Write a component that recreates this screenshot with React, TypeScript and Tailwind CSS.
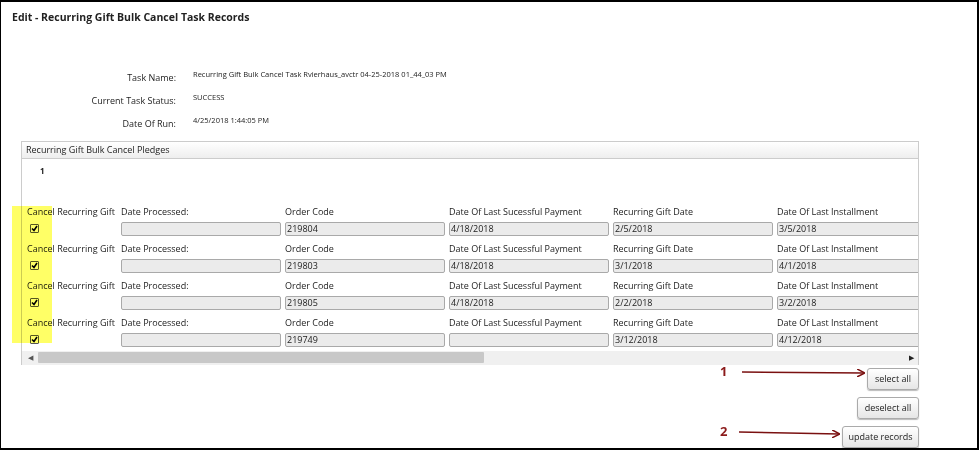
import React from "react";

const rows = [
  ["219804", "4/18/2018", "2/5/2018", "3/5/2018"],
  ["219803", "4/18/2018", "3/1/2018", "4/1/2018"],
  ["219805", "4/18/2018", "2/2/2018", "3/2/2018"],
  ["219749", "", "3/12/2018", "4/12/2018"],
];

const Inp = ({ v }: { v: string }) => (
  <div className="w-[160px] h-[14px] border border-[#a9a9a9] rounded-[2px] bg-[#ebebeb] text-[9px] leading-[12px] pl-[1px] shrink-0">{v}</div>
);

const Check = () => (
  <div className="w-[9px] h-[9px] border border-[#555] bg-white flex items-center justify-center rounded-[1px]">
    <svg width="7" height="7" viewBox="0 0 7 7"><path d="M1 3.5 L3 5.5 L6 1" stroke="#000" strokeWidth="1.6" fill="none" /></svg>
  </div>
);

const Btn = ({ t, w }: { t: string; w: string }) => (
  <div className={`${w} h-[22px] border border-[#aaa] rounded-[3px] bg-gradient-to-b from-white to-[#e6e6e6] text-[9px] flex items-center justify-center shadow-[0_1px_1px_#bbb]`}>{t}</div>
);

export default function App() {
  return (
    <div className="w-[979px] h-[450px] bg-white relative overflow-hidden text-[#222]" style={{ fontFamily: '"Open Sans", sans-serif' }}>
      <div className="absolute inset-0 border-[2px] border-black border-l-[1px] pointer-events-none" />
      <div className="pt-[10px] pl-[12px] font-bold text-[10.5px]">Edit - Recurring Gift Bulk Cancel Task Records</div>
      <div className="mt-[45px] flex flex-col gap-[10px] text-[9px]">
        {[
          ["Task Name:", "Recurring Gift Bulk Cancel Task Rvierhaus_avctr 04-25-2018 01_44_03 PM"],
          ["Current Task Status:", "SUCCESS"],
          ["Date Of Run:", "4/25/2018 1:44:05 PM"],
        ].map(([l, v]) => (
          <div key={l} className="flex items-start h-[13px]">
            <div className="w-[176px] text-right text-[9px]">{l}</div>
            <div className="ml-[17px] text-[7.5px] -mt-[2px]">{v}</div>
          </div>
        ))}
      </div>
      <div className="ml-[21px] mt-[11px] w-[898px] border border-[#ccc] border-b-0">
        <div className="h-[17px] bg-gradient-to-b from-white to-[#eee] border-b border-[#ccc] text-[9px] leading-[16px] pl-[4px]">Recurring Gift Bulk Cancel Pledges</div>
        <div className="h-[44px] pl-[18px] pt-[6px] text-[8px] font-bold">1</div>
        <div className="overflow-hidden text-[9px] whitespace-nowrap">
          {rows.map((r, i) => (
            <div key={i} className="h-[37px]">
              <div className="flex h-[17px] items-center pl-[5px]">
                <div className="w-[94px] shrink-0">Cancel Recurring Gift</div>
                <div className="w-[164px] shrink-0">Date Processed:</div>
                <div className="w-[164px] shrink-0">Order Code</div>
                <div className="w-[164px] shrink-0">Date Of Last Sucessful Payment</div>
                <div className="w-[164px] shrink-0">Recurring Gift Date</div>
                <div className="shrink-0">Date Of Last Installment</div>
              </div>
              <div className="flex items-center h-[18px] gap-[4px]">
                <div className="w-[95px] pl-[8px] shrink-0"><Check /></div>
                <Inp v="" />
                <Inp v={r[0]} />
                <Inp v={r[1]} />
                <Inp v={r[2]} />
                <Inp v={r[3]} />
              </div>
            </div>
          ))}
        </div>
        <div className="h-[14px] bg-[#f0f0f0] flex items-center">
          <div className="w-[16px] text-[7px] text-center text-[#555]">◀</div>
          <div className="w-[446px] h-[11px] bg-[#c8c8c8] rounded-[1px]" />
          <div className="flex-1" />
          <div className="w-[14px] text-[7px] text-center">▶</div>
        </div>
      </div>
      <div className="w-[919px] flex flex-col items-end gap-[7px] mt-[3px]">
        <Btn t="select all" w="w-[52px]" />
        <Btn t="deselect all" w="w-[62px]" />
        <Btn t="update records" w="w-[77px]" />
      </div>
      <div className="absolute left-[12px] top-[206px] w-[40px] h-[137px] bg-[#ffff00]/60 mix-blend-multiply" />
      <div className="absolute left-[720px] top-[362px] text-[13px] font-bold text-[#8b1a1a]">1</div>
      <div className="absolute left-[720px] top-[422px] text-[13px] font-bold text-[#8b1a1a]">2</div>
      <svg className="absolute left-0 top-0" width="979" height="450">
        <defs>
          <marker id="a" markerWidth="8" markerHeight="8" refX="7" refY="4" orient="auto" markerUnits="userSpaceOnUse">
            <path d="M0 0 L8 4 L0 8" stroke="#7a1010" strokeWidth="1.5" fill="none" />
          </marker>
        </defs>
        <line x1="742" y1="372" x2="864" y2="373" stroke="#7a1010" strokeWidth="1.5" markerEnd="url(#a)" />
        <line x1="739" y1="432" x2="839" y2="434" stroke="#7a1010" strokeWidth="1.5" markerEnd="url(#a)" />
      </svg>
    </div>
  );
}
